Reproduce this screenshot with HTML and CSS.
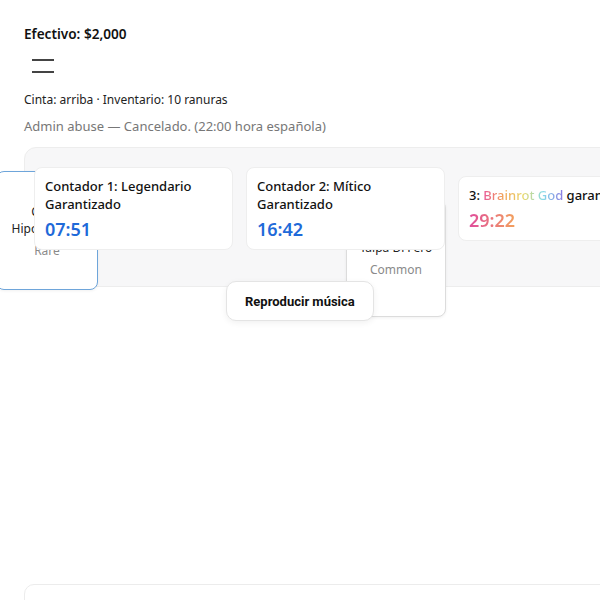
FILE: index.html
```html
<!DOCTYPE html>
<html lang="es">
  <head>
    <meta charset="UTF-8" />
    <meta name="viewport" content="width=device-width, initial-scale=1.0" />
    <title>Cinta de Brainrots</title>
    <link rel="stylesheet" href="styles.css">
  </head>
  <body>
    <h1 class="efectivo">Efectivo: $2,000</h1>

    <button class="menu" aria-label="Menú">
      <span></span>
      <span></span>
    </button>

    <p class="estado">Cinta: arriba · Inventario: 10 ranuras</p>
    <p class="aviso">Admin abuse — Cancelado. (22:00 hora española)</p>

    <section class="cinta">
      <!-- contadores -->
      <div class="contadores">
        <div class="contador">
          <div class="titulo">Contador 1: Legendario Garantizado</div>
          <div class="tiempo">07:51</div>
        </div>
        <div class="contador">
          <div class="titulo">Contador 2: Mítico Garantizado</div>
          <div class="tiempo">16:42</div>
        </div>
        <div class="contador ancho">
          <div class="titulo">3: <span class="arcoiris">Brainrot God</span> garantizado</div>
          <div class="tiempo dios">29:22</div>
        </div>
      </div>

      <!-- items que van pasando por la cinta -->
      <div class="item rare" style="left: -29px; top: 23px; height: 119px;">
        <div class="nombre">Cacto Hipopotamo</div>
        <div class="rareza">Rare</div>
      </div>
      <div class="item" style="left: 321px; top: 52px; height: 117px;">
        <div class="nombre">Talpa Di Fero</div>
        <div class="rareza">Common</div>
      </div>

      <button class="musica">Reproducir música</button>
    </section>

    <section class="base"></section>
  </body>
</html>
```

FILE: styles.css
```css
* {
  box-sizing: border-box;
}

html,
body {
  overflow-x: hidden;
}

body {
  margin: 0;
  padding: 24px;
  font-family: "Noto Sans", "Open Sans", sans-serif;
  color: #111;
  background: #fff;
}

.efectivo {
  margin: 0;
  font-size: 13.6px;
  line-height: 20px;
  font-weight: 600;
}

.menu {
  display: flex;
  flex-direction: column;
  gap: 10px;
  margin-top: 8px;
  padding: 7px 8px;
  border: none;
  background: none;
}

.menu span {
  display: block;
  width: 22px;
  height: 2px;
  background: #444;
}

.estado {
  margin: 12px 0 0;
  font-size: 12px;
  line-height: 16px;
  color: #222;
}

.aviso {
  margin: 9px 0 0;
  font-size: 13px;
  line-height: 18px;
  color: #777;
}

.cinta {
  position: relative;
  width: 700px;
  height: 140px;
  margin-top: 12px;
  padding: 19px 9px;
  background: #f7f7f8;
  border: 1px solid #ededed;
  border-radius: 12px;
}

.contadores {
  display: flex;
  align-items: center;
  gap: 13px;
  height: 82px;
}

.contador {
  position: relative;
  z-index: 2;
  width: 199px;
  flex-shrink: 0;
  padding: 9px 10px 8px;
  background: #fff;
  border: 1px solid #eee;
  border-radius: 8px;
}

.contador.ancho {
  width: auto;
  white-space: nowrap;
}

.titulo {
  font-size: 13px;
  line-height: 18px;
  font-weight: 500;
  color: #111;
}

.tiempo {
  margin-top: 4px;
  font-size: 18px;
  line-height: 24px;
  font-weight: 600;
  color: #1f6ad9;
}

.arcoiris {
  background: linear-gradient(90deg, #e8579a, #f2a35a, #e9d86a, #86dbe8, #8c7be3);
  -webkit-background-clip: text;
  background-clip: text;
  color: transparent;
}

.tiempo.dios {
  background: linear-gradient(90deg, #e04c9c, #f3a15c);
  -webkit-background-clip: text;
  background-clip: text;
  color: transparent;
  display: inline-block;
}

.item {
  position: absolute;
  z-index: 1;
  width: 100px;
  display: flex;
  flex-direction: column;
  justify-content: center;
  align-items: center;
  gap: 6px;
  padding: 8px 10px;
  text-align: center;
  background: #fff;
  border: 1px solid #dcdcdc;
  border-radius: 8px;
  box-shadow: 0 1px 3px rgba(0, 0, 0, 0.06);
}

.item.rare {
  width: 102px;
  border: 1.5px solid #6ea5da;
}

.nombre {
  font-size: 12px;
  line-height: 17px;
  color: #222;
}

.rareza {
  font-size: 12px;
  line-height: 16px;
  color: #8a8a8a;
}

.musica {
  position: absolute;
  z-index: 3;
  left: 201px;
  top: 133px;
  height: 40px;
  padding: 0 18px;
  font-family: Roboto, "Noto Sans", sans-serif;
  font-size: 13px;
  font-weight: 700;
  color: #111;
  background: #fff;
  border: 1px solid #e4e4e4;
  border-radius: 10px;
  box-shadow: 0 2px 6px rgba(0, 0, 0, 0.06);
}

.base {
  width: 700px;
  height: 120px;
  margin-top: 297px;
  border: 1px solid #ececec;
  border-radius: 10px;
}
```
